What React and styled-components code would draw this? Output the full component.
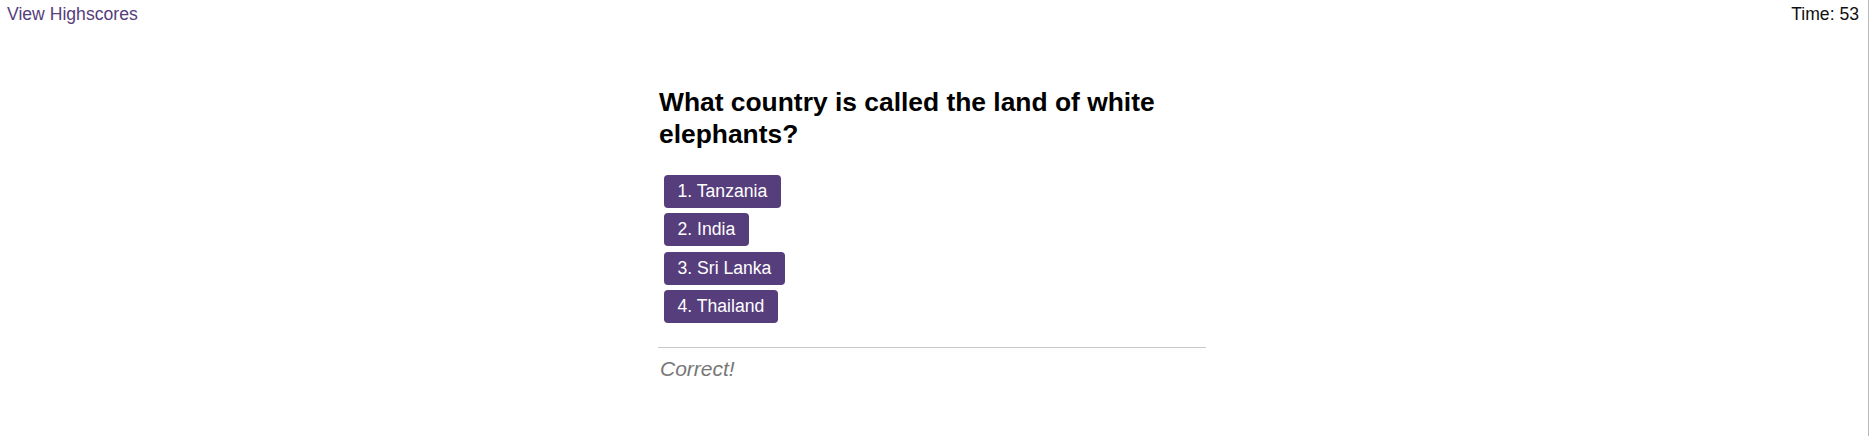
import styled, {createGlobalStyle} from "styled-components";

const GlobalStyle = createGlobalStyle`
  html, body {
    margin: 0;
    padding: 0;
    background: #ffffff;
  }

  body {
    font-family: "Liberation Sans", Arial, sans-serif;
  }
`;

const Page = styled.div`
  width: 1869px;
  min-height: 436px;
  box-sizing: border-box;
  border-right: 1px solid #b8b8b8;
`;

const TopBar = styled.header`
  display: flex;
  justify-content: space-between;
  align-items: flex-start;
  padding: 4px 9px 0 7px;
  font-size: 17.6px;
  line-height: 20px;
`;

const HighscoreLink = styled.a`
  color: #563d7c;
  text-decoration: none;
  cursor: pointer;
`;

const Timer = styled.div`
  color: #111111;
`;

const Quiz = styled.main`
  width: 550px;
  margin: 62px auto 0;
`;

const Question = styled.h2`
  margin: 0 0 25px;
  font-size: 26.4px;
  line-height: 32px;
  font-weight: 700;
  color: #000000;
`;

const Choices = styled.div`
  display: flex;
  flex-direction: column;
  align-items: flex-start;
  gap: 5.3px;
  padding-left: 5px;
`;

const Choice = styled.button`
  height: 33px;
  padding: 0 13.5px;
  border: none;
  border-radius: 4px;
  background: #563d7c;
  color: #ffffff;
  font-family: inherit;
  font-size: 17.6px;
  cursor: pointer;
`;

const Divider = styled.hr`
  width: 548px;
  margin: 24px 0 0 -1px;
  border: none;
  border-top: 1px solid #c8c8c8;
`;

const Feedback = styled.p`
  margin: 9px 0 0 1px;
  font-size: 21px;
  font-style: italic;
  color: #777777;
`;

const choices = ["Tanzania", "India", "Sri Lanka", "Thailand"];

const App = () => {
  return (
    <Page>
      <GlobalStyle/>
      <TopBar>
        <HighscoreLink>View Highscores</HighscoreLink>
        <Timer>Time: 53</Timer>
      </TopBar>
      <Quiz>
        <Question>What country is called the land of white elephants?</Question>
        <Choices>
          {
            choices.map((x, i) => (
              <Choice key={x}>{i + 1}. {x}</Choice>
            ))
          }
        </Choices>
        <Divider/>
        <Feedback>Correct!</Feedback>
      </Quiz>
    </Page>
  )
};

export default App;
